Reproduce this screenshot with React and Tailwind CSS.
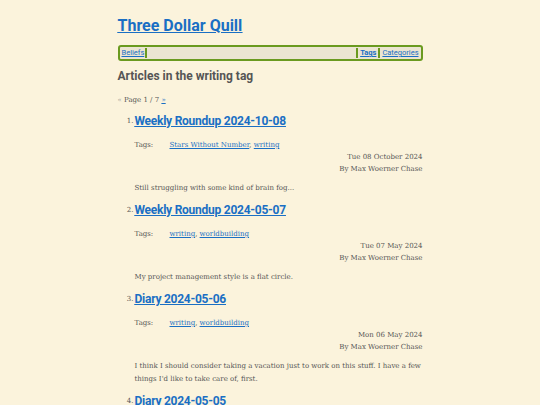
import React from "react";

const ARTICLES = [
  {
    title: "Weekly Roundup 2024-10-08",
    tags: ["Stars Without Number", "writing"],
    date: "Tue 08 October 2024",
    summary: "Still struggling with some kind of brain fog...",
  },
  {
    title: "Weekly Roundup 2024-05-07",
    tags: ["writing", "worldbuilding"],
    date: "Tue 07 May 2024",
    summary: "My project management style is a flat circle.",
  },
  {
    title: "Diary 2024-05-06",
    tags: ["writing", "worldbuilding"],
    date: "Mon 06 May 2024",
    summary:
      "I think I should consider taking a vacation just to work on this stuff. I have a few things I'd like to take care of, first.",
  },
  {
    title: "Diary 2024-05-05",
    tags: ["writing"],
    date: "Sun 05 May 2024",
    summary: "Another day.",
  },
];

const head = "font-['Roboto','Noto_Sans',sans-serif]";
const body = "font-['DejaVu_Serif',serif]";

function Article({ a, n }) {
  return (
    <li className="flex">
      <span className={`${body} w-[17px] shrink-0 text-right pr-[1px] text-[7px] leading-[19px] text-[#555]`}>
        {n}.
      </span>
      <div className="flex-1 min-w-0">
        <h3 className={`${head} text-[12px] font-bold leading-[19px] tracking-[-0.25px] text-[#1a6fc4] underline`}>
          <a href="#">{a.title}</a>
        </h3>
        <div className={`${body} text-[7px] text-[#555] mt-[8px] flex leading-[12px]`}>
          <span className="w-[35px]">Tags:</span>
          <span>
            {a.tags.map((t, i) => (
              <React.Fragment key={t}>
                {i > 0 && ", "}
                <a href="#" className="text-[#1a6fc4] underline">{t}</a>
              </React.Fragment>
            ))}
          </span>
        </div>
        <div className={`${body} text-[7px] text-[#555] text-right leading-[12px]`}>
          <div>{a.date}</div>
          <div>By Max Woerner Chase</div>
        </div>
        <p className={`${body} text-[7px] text-[#555] leading-[13px] mt-[7px] mb-[6px]`}>{a.summary}</p>
      </div>
    </li>
  );
}

export default function App() {
  return (
    <div className="min-h-[405px] bg-[#fbf3dc]">
      <div className="w-[305px] mx-auto pt-[14px]">
        <h1 className={`${head} text-[16px] font-bold leading-[24px] text-[#1a6fc4] underline`}>
          <a href="#">Three Dollar Quill</a>
        </h1>
        <nav className={`${head} mt-[7px] flex items-stretch h-[16px] rounded-[3px] border-2 border-[#6a9a1f] bg-[#ebe5d1] text-[7.5px] leading-[12px] px-[2px]`}>
          <a href="#" className="text-[#1a6fc4] underline pr-[1px]">Beliefs</a>
          <span className="w-[2px] bg-[#6a9a1f] my-[1px]" />
          <span className="flex-1" />
          <span className="w-[2px] bg-[#6a9a1f] my-[1px]" />
          <a href="#" className="text-[#1a6fc4] underline font-bold px-[2px]">Tags</a>
          <span className="w-[2px] bg-[#6a9a1f] my-[1px]" />
          <a href="#" className="text-[#1a6fc4] underline pl-[2px]">Categories</a>
        </nav>
        <h2 className={`${head} mt-[6px] text-[12px] font-bold leading-[18px] text-[#555]`}>
          Articles in the writing tag
        </h2>
        <p className={`${body} mt-[9px] text-[7px] leading-[12px] text-[#555]`}>
          <span className="text-[#999]">«</span> Page 1 / 7{" "}
          <a href="#" className="text-[#1a6fc4] underline">»</a>
        </p>
        <ol className="mt-[6px]">
          {ARTICLES.map((a, i) => (
            <Article key={a.title} a={a} n={i + 1} />
          ))}
        </ol>
      </div>
    </div>
  );
}
